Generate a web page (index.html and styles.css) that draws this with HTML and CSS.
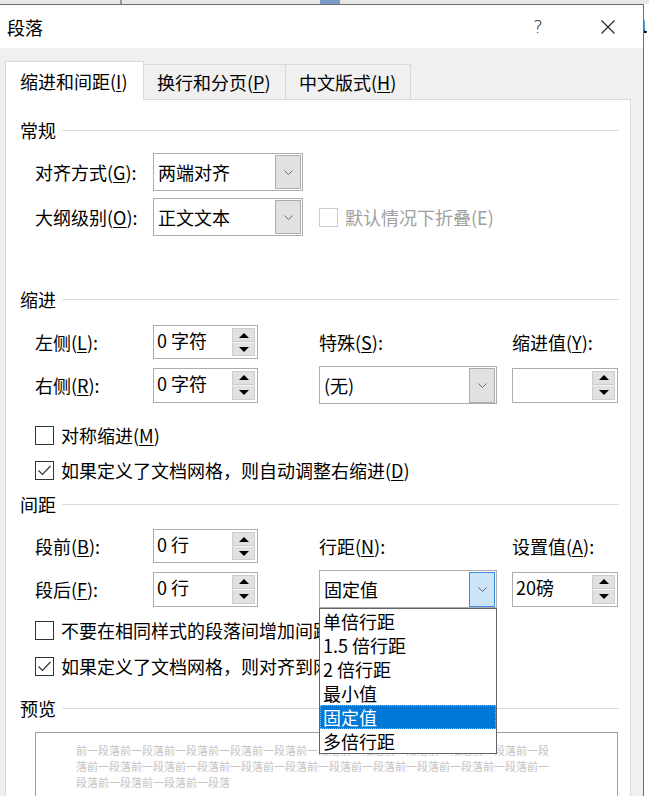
FILE: index.html
```html
<!DOCTYPE html>
<html lang="zh-CN">
<head>
  <meta charset="UTF-8">
  <title>段落</title>
  <link rel="stylesheet" href="styles.css">
</head>
<body>
  <div class="topbar"></div>
  <div class="screen">
    <div class="dialog">
      <div class="titlebar">
        <span class="title">段落</span>
        <span class="help">?</span>
        <svg class="close" width="14" height="14" viewBox="0 0 14 14"><path d="M0.5 0.5 L13.5 13.5 M13.5 0.5 L0.5 13.5" stroke="#222" stroke-width="1.1" fill="none"/></svg>
      </div>

      <div class="dialog-body">
        <div class="tabs">
          <div class="tab active">缩进和间距(<u>I</u>)</div>
          <div class="tab tab2">换行和分页(<u>P</u>)</div>
          <div class="tab tab3">中文版式(<u>H</u>)</div>
        </div>

        <div class="panel">
          <!-- 常规 -->
          <div class="group-title g-general"><span>常规</span></div>
          <div class="row row-a">
            <span class="lbl">对齐方式(<u>G</u>):</span>
            <div class="combo w150"><span class="combo-text">两端对齐</span><span class="drop"><svg width="9" height="5" viewBox="0 0 9 5"><polyline points="0.5,0.5 4.5,4.5 8.5,0.5" fill="none" stroke="#707070" stroke-width="1"/></svg></span></div>
          </div>
          <div class="row row-b">
            <span class="lbl">大纲级别(<u>O</u>):</span>
            <div class="combo w150"><span class="combo-text">正文文本</span><span class="drop"><svg width="9" height="5" viewBox="0 0 9 5"><polyline points="0.5,0.5 4.5,4.5 8.5,0.5" fill="none" stroke="#707070" stroke-width="1"/></svg></span></div>
            <div class="check disabled span2"><span class="box"></span><span>默认情况下折叠(E)</span></div>
          </div>

          <!-- 缩进 -->
          <div class="group-title g-indent"><span>缩进</span></div>
          <div class="row row-c">
            <span class="lbl">左侧(<u>L</u>):</span>
            <div class="spin w105"><span class="spin-val">0 字符</span><div class="spin-btns"><span class="sb"><i class="up"></i></span><span class="sb"><i class="down"></i></span></div></div>
            <span class="lbl">特殊(<u>S</u>):</span>
            <span class="lbl">缩进值(<u>Y</u>):</span>
          </div>
          <div class="row row-d">
            <span class="lbl">右侧(<u>R</u>):</span>
            <div class="spin w105"><span class="spin-val">0 字符</span><div class="spin-btns"><span class="sb"><i class="up"></i></span><span class="sb"><i class="down"></i></span></div></div>
            <div class="combo w178 tall"><span class="combo-text">(无)</span><span class="drop"><svg width="9" height="5" viewBox="0 0 9 5"><polyline points="0.5,0.5 4.5,4.5 8.5,0.5" fill="none" stroke="#707070" stroke-width="1"/></svg></span></div>
            <div class="spin w106"><span class="spin-val"></span><div class="spin-btns"><span class="sb"><i class="up"></i></span><span class="sb"><i class="down"></i></span></div></div>
          </div>
          <div class="check line c1"><span class="box"></span><span>对称缩进(<u>M</u>)</span></div>
          <div class="check line c2"><span class="box checked"><svg width="17" height="17" viewBox="0 0 17 17"><polyline points="2.5,8.5 6.5,12.5 14.5,4" fill="none" stroke="#333" stroke-width="1.2"/></svg></span><span>如果定义了文档网格，则自动调整右缩进(<u>D</u>)</span></div>

          <!-- 间距 -->
          <div class="group-title g-space"><span>间距</span></div>
          <div class="row row-e">
            <span class="lbl">段前(<u>B</u>):</span>
            <div class="spin w105"><span class="spin-val">0 行</span><div class="spin-btns"><span class="sb"><i class="up"></i></span><span class="sb"><i class="down"></i></span></div></div>
            <span class="lbl">行距(<u>N</u>):</span>
            <span class="lbl">设置值(<u>A</u>):</span>
          </div>
          <div class="row row-f">
            <span class="lbl">段后(<u>F</u>):</span>
            <div class="spin w105"><span class="spin-val">0 行</span><div class="spin-btns"><span class="sb"><i class="up"></i></span><span class="sb"><i class="down"></i></span></div></div>
            <div class="combo w178 tall open">
              <span class="combo-text">固定值</span>
              <span class="drop"><svg width="9" height="5" viewBox="0 0 9 5"><polyline points="0.5,0.5 4.5,4.5 8.5,0.5" fill="none" stroke="#606060" stroke-width="1"/></svg></span>
              <ul class="dropdown">
                <li>单倍行距</li>
                <li>1.5 倍行距</li>
                <li>2 倍行距</li>
                <li>最小值</li>
                <li class="selected">固定值</li>
                <li>多倍行距</li>
              </ul>
            </div>
            <div class="spin w106"><span class="spin-val">20磅</span><div class="spin-btns"><span class="sb"><i class="up"></i></span><span class="sb"><i class="down"></i></span></div></div>
          </div>
          <div class="check line c3"><span class="box"></span><span>不要在相同样式的段落间增加间距(<u>C</u>)</span></div>
          <div class="check line c4"><span class="box checked"><svg width="17" height="17" viewBox="0 0 17 17"><polyline points="2.5,8.5 6.5,12.5 14.5,4" fill="none" stroke="#333" stroke-width="1.2"/></svg></span><span>如果定义了文档网格，则对齐到网格(<u>W</u>)</span></div>

          <!-- 预览 -->
          <div class="group-title g-preview"><span>预览</span></div>
          <div class="preview">
            <p class="preview-text">前一段落前一段落前一段落前一段落前一段落前一段落前一段落前一段落前一段落前一段落前一段落前一段落前一段落前一段落前一段落前一段落前一段落前一段落前一段落前一段落前一段落前一段落前一段落前一段落前一段落</p>
          </div>
        </div>
      </div>
    </div>

    <div class="side">
      <span class="side-a">a</span>
    </div>
  </div>
</body>
</html>
```

FILE: styles.css
```css
* {
  margin: 0;
  padding: 0;
  box-sizing: border-box;
}

body {
  font-family: "Noto Sans CJK SC", "Noto Sans", sans-serif;
  font-size: 18px;
  color: #000;
  background: #fff;
  width: 649px;
  height: 796px;
  overflow: hidden;
}

u {
  text-decoration: underline;
  text-underline-offset: 2px;
}

.topbar {
  height: 4px;
  background: linear-gradient(90deg, #e8e8e8 0, #e8e8e8 120px, #9a9a9a 120px, #9a9a9a 122px, #e8e8e8 122px, #e8e8e8 320px, #7a9bc6 320px, #7a9bc6 340px, #e8e8e8 340px);
}

.screen {
  display: flex;
  height: 792px;
  overflow: hidden;
}

/* dialog frame */
.dialog {
  width: 644px;
  flex: none;
  border-top: 1px solid #707070;
  border-right: 1px solid #707070;
  background: #f0f0f0;
  display: flex;
  flex-direction: column;
  overflow: hidden;
}

.titlebar {
  flex: none;
  height: 43px;
  background: #fff;
  display: flex;
  align-items: center;
  padding-left: 7px;
}

.title {
  flex: 1;
  line-height: 26px;
}

.help {
  width: 20px;
  text-align: center;
  font-family: "DejaVu Sans", sans-serif;
  font-weight: 300;
  font-size: 18px;
  color: #222;
  margin-right: 53px;
}

.close {
  margin-right: 28px;
}

.dialog-body {
  flex: 1;
  min-height: 0;
  padding: 13px 12px 0 5px;
  display: flex;
  flex-direction: column;
}

/* tabs */
.tabs {
  flex: none;
  display: flex;
  align-items: flex-end;
  height: 38px;
}

.tab {
  height: 35px;
  line-height: 34px;
  padding-left: 13px;
  border: 1px solid #d9d9d9;
  border-bottom: none;
  background: #f0f0f0;
  margin-left: -1px;
  white-space: nowrap;
}

.tab.active {
  width: 139px;
  height: 39px;
  line-height: 38px;
  margin-left: 0;
  margin-bottom: -1px;
  padding-left: 14px;
  background: #fff;
  position: relative;
  z-index: 1;
}

.tab2 {
  width: 143px;
}

.tab3 {
  width: 126px;
}

.panel {
  flex: none;
  height: 800px;
  background: #fff;
  border: 1px solid #d9d9d9;
  border-bottom: none;
  padding: 0 11px 0 14px;
}

/* group headings */
.group-title {
  display: flex;
  align-items: center;
  height: 24px;
  line-height: 24px;
}

.group-title::after {
  content: "";
  flex: 1;
  height: 1px;
  background: #dcdcdc;
  margin-left: 6px;
}

.g-general { margin-top: 18px; }
.g-indent { margin-top: 51px; }
.g-space { margin-top: 10px; }
.g-preview { margin-top: 18px; }

/* form rows */
.row {
  display: grid;
  grid-template-columns: 118px 166px 193px 106px;
  align-items: center;
  margin-left: 15px;
}

.lbl {
  line-height: 24px;
  white-space: nowrap;
}

.row-a { height: 38px; margin-top: 11px; }
.row-b { height: 38px; margin-top: 7px; }
.row-c { height: 34px; margin-top: 14px; }
.row-d { height: 38px; margin-top: 7px; }
.row-e { height: 34px; margin-top: 13px; }
.row-f { height: 38px; margin-top: 7px; }

.span2 {
  grid-column: span 2;
}

/* combo box */
.combo {
  height: 38px;
  border: 1px solid #adadad;
  background: #fff;
  display: flex;
  align-items: center;
  justify-content: space-between;
  padding: 1px 1px 1px 4px;
  position: relative;
}

.w150 { width: 150px; }
.w178 { width: 178px; }

.combo-text {
  line-height: 24px;
  white-space: nowrap;
}

.drop {
  width: 26px;
  height: 100%;
  background: #e1e1e1;
  border: 1px solid #adadad;
  display: flex;
  align-items: center;
  justify-content: center;
}

.combo.tall .drop {
  height: 35px;
  align-self: flex-start;
}

.combo.open .drop {
  background: #cce4f7;
  border-color: #3d8ee0;
}

.dropdown {
  list-style: none;
  position: absolute;
  top: calc(100% + 1px);
  left: -1px;
  width: 178px;
  background: #fff;
  border: 1px solid #646464;
  z-index: 5;
}

.dropdown li {
  height: 24px;
  line-height: 24px;
  padding-left: 3px;
  white-space: nowrap;
}

.dropdown li.selected {
  background: #0078d7;
  color: #fff;
  outline: 1px dotted #7fb8e8;
  outline-offset: -1px;
}

/* spin box */
.spin {
  height: 35px;
  border: 1px solid #adadad;
  background: #fff;
  display: flex;
  justify-content: space-between;
  padding: 1px 2px 1px 3px;
}

.row-c .spin,
.row-e .spin {
  height: 34px;
}

.w105 { width: 105px; }
.w106 { width: 106px; }

.spin-val {
  line-height: 26px;
  white-space: nowrap;
}

.spin-btns {
  width: 23px;
  display: flex;
  flex-direction: column;
  padding: 1px 0;
}

.sb {
  flex: 1;
  background: #e1e1e1;
  border: 1px solid #cdcdcd;
  display: flex;
  align-items: center;
  justify-content: center;
}

.sb + .sb {
  border-top-color: #f4f4f4;
}

.up {
  width: 0;
  height: 0;
  border-left: 5px solid transparent;
  border-right: 5px solid transparent;
  border-bottom: 5px solid #000;
}

.down {
  width: 0;
  height: 0;
  border-left: 5px solid transparent;
  border-right: 5px solid transparent;
  border-top: 5px solid #000;
}

/* check boxes */
.check {
  display: flex;
  align-items: center;
  gap: 7px;
  line-height: 24px;
  white-space: nowrap;
}

.check.line {
  margin-left: 15px;
  height: 24px;
}

.c1 { margin-top: 19px; }
.c2 { margin-top: 11px; }
.c3 { margin-top: 10px; }
.c4 { margin-top: 12px; }

.box {
  width: 19px;
  height: 19px;
  border: 1px solid #333;
  background: #fff;
  display: flex;
  align-items: center;
  justify-content: center;
  flex: none;
}

.check.disabled {
  color: #a0a0a0;
}

.check.disabled .box {
  border-color: #cccccc;
}

/* preview */
.preview {
  margin: 12px 1px 0 15px;
  height: 80px;
  border: 1px solid #a0a0a0;
  border-bottom: none;
  background: #fff;
  padding: 9px 0 0 40px;
}

.preview-text {
  width: 474px;
  font-size: 11px;
  line-height: 16px;
  color: #c4c4c4;
}

/* document behind the dialog */
.side {
  flex: 1;
  background: #fff;
  overflow: hidden;
  display: flex;
  flex-direction: column;
}

.side-a {
  font-family: "Liberation Sans", sans-serif;
  font-size: 30px;
  line-height: 30px;
  margin: 4px 0 0 -14px;
}
```
